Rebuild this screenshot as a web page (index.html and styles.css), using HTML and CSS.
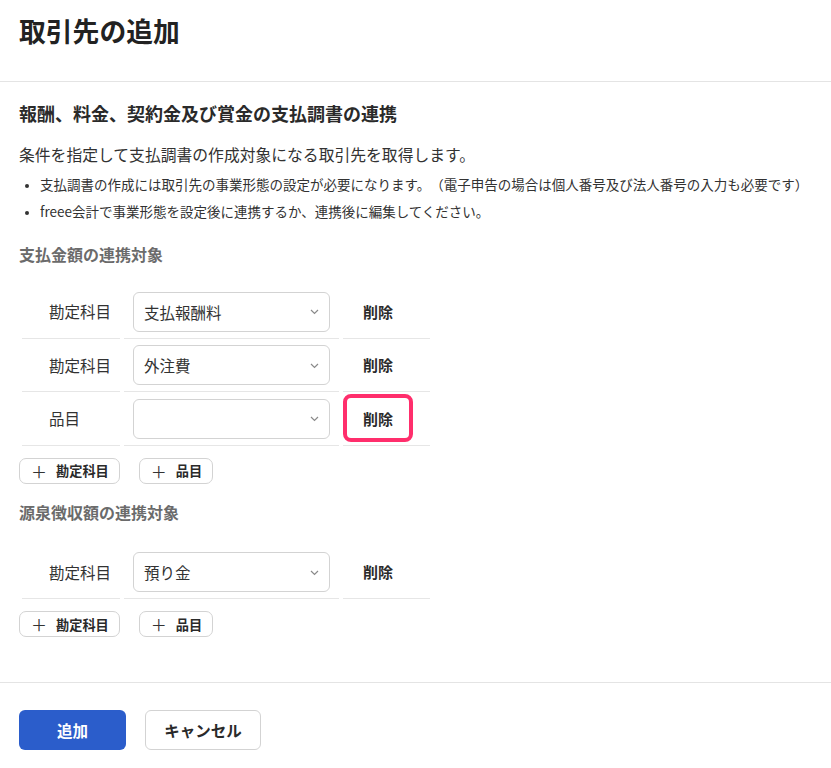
FILE: index.html
```html
<!DOCTYPE html>
<html lang="ja">
<head>
<meta charset="utf-8">
<title>取引先の追加</title>
<link rel="stylesheet" href="styles.css">
</head>
<body>
<div class="dialog">
  <header class="dialog-header">
    <h1 class="dialog-title">取引先の追加</h1>
  </header>
  <main class="dialog-body">
    <h2 class="section-title">報酬、料金、契約金及び賞金の支払調書の連携</h2>
    <p class="lead">条件を指定して支払調書の作成対象になる取引先を取得します。</p>
    <ul class="notes">
      <li>支払調書の作成には取引先の事業形態の設定が必要になります。（電子申告の場合は個人番号及び法人番号の入力も必要です）</li>
      <li>freee会計で事業形態を設定後に連携するか、連携後に編集してください。</li>
    </ul>

    <h3 class="group-title">支払金額の連携対象</h3>
    <div class="cond-table">
      <div class="cell cell-label">勘定科目</div>
      <div class="cell cell-select">
        <div class="select"><span class="select-value">支払報酬料</span><svg class="chev" width="9" height="6" viewBox="0 0 9 6"><path d="M1 1l3.5 3.5L8 1" fill="none" stroke="#8a8a8a" stroke-width="1.2"/></svg></div>
      </div>
      <div class="cell cell-action"><button class="del-btn">削除</button></div>

      <div class="cell cell-label">勘定科目</div>
      <div class="cell cell-select">
        <div class="select"><span class="select-value">外注費</span><svg class="chev" width="9" height="6" viewBox="0 0 9 6"><path d="M1 1l3.5 3.5L8 1" fill="none" stroke="#8a8a8a" stroke-width="1.2"/></svg></div>
      </div>
      <div class="cell cell-action"><button class="del-btn">削除</button></div>

      <div class="cell cell-label">品目</div>
      <div class="cell cell-select">
        <div class="select"><span class="select-value"></span><svg class="chev" width="9" height="6" viewBox="0 0 9 6"><path d="M1 1l3.5 3.5L8 1" fill="none" stroke="#8a8a8a" stroke-width="1.2"/></svg></div>
      </div>
      <div class="cell cell-action"><button class="del-btn del-btn-highlight">削除</button></div>
    </div>
    <div class="add-row">
      <button class="add-btn"><span class="plus">＋</span>勘定科目</button>
      <button class="add-btn"><span class="plus">＋</span>品目</button>
    </div>

    <h3 class="group-title group-title-2">源泉徴収額の連携対象</h3>
    <div class="cond-table cond-table-2">
      <div class="cell cell-label">勘定科目</div>
      <div class="cell cell-select">
        <div class="select"><span class="select-value">預り金</span><svg class="chev" width="9" height="6" viewBox="0 0 9 6"><path d="M1 1l3.5 3.5L8 1" fill="none" stroke="#8a8a8a" stroke-width="1.2"/></svg></div>
      </div>
      <div class="cell cell-action"><button class="del-btn">削除</button></div>
    </div>
    <div class="add-row">
      <button class="add-btn"><span class="plus">＋</span>勘定科目</button>
      <button class="add-btn"><span class="plus">＋</span>品目</button>
    </div>
  </main>
  <footer class="dialog-footer">
    <button class="btn btn-primary">追加</button>
    <button class="btn btn-secondary">キャンセル</button>
  </footer>
</div>
</body>
</html>
```

FILE: styles.css
```css
* { box-sizing: border-box; }
html, body { margin: 0; padding: 0; background: #fff; }
body {
  font-family: "Noto Sans CJK JP", "Noto Sans", sans-serif;
  color: #323232;
  width: 831px;
  text-spacing-trim: space-all;
}
button { font-family: inherit; cursor: pointer; }

.dialog-header {
  height: 82px;
  border-bottom: 1px solid #e4e4e4;
  padding: 12px 19px 0;
}
.dialog-title {
  margin: 0;
  font-size: 26.8px;
  line-height: 38px;
  font-weight: 700;
  color: #222;
}

.dialog-body {
  padding: 17px 19px 45px;
}
.section-title {
  margin: 0;
  font-size: 18px;
  line-height: 28px;
  font-weight: 700;
  color: #2a2a2a;
}
.lead {
  margin: 16px 0 0;
  font-size: 15.8px;
  line-height: 24px;
}
.notes {
  margin: 4px 0 0;
  padding: 0 0 0 21px;
  font-size: 13.5px;
  line-height: 27px;
}
.notes li::marker { font-size: 10px; }

.group-title {
  margin: 17px 0 0;
  font-size: 16px;
  line-height: 24px;
  font-weight: 700;
  color: #6b6b6b;
}
.group-title-2 { margin-top: 16px; }

.cond-table {
  display: grid;
  grid-template-columns: 98px 215px 87px;
  column-gap: 4px;
  padding-left: 3px;
  margin-top: 19px;
}
.cond-table-2 { margin-top: 22px; }
.cell {
  border-bottom: 1px solid #e6e6e6;
  height: 53.5px;
  display: flex;
  align-items: center;
}
.cell-label {
  padding-left: 27px;
  font-size: 15.5px;
}
.cell-select { padding: 7px 9px 6px; }
.select {
  width: 100%;
  height: 40px;
  border: 1px solid #d3d3d3;
  border-radius: 6px;
  display: flex;
  align-items: center;
  justify-content: space-between;
  padding: 0 10px;
  font-size: 15.5px;
  background: #fff;
}
.chev { margin-top: 1px; }
.cell-action { padding: 0 0 0 4px; }
.del-btn {
  width: 62px;
  height: 40px;
  border: none;
  background: #fff;
  font-size: 15px;
  font-weight: 700;
  color: #2a2a2a;
  padding: 0;
  border-radius: 3px;
}
.del-btn-highlight {
  outline: 4px solid #ff2e6c;
  border-radius: 4px;
}

.add-row {
  display: flex;
  gap: 19px;
  margin-top: 12px;
}
.add-btn {
  height: 26px;
  border: 1px solid #d3d3d3;
  border-radius: 7px;
  background: #fff;
  padding: 0 10px 0 11px;
  font-size: 13.2px;
  font-weight: 700;
  color: #2a2a2a;
  display: flex;
  align-items: center;
}
.plus {
  font-weight: 400;
  font-size: 16px;
  margin-right: 9px;
  color: #333;
}

.dialog-footer {
  border-top: 1px solid #e4e4e4;
  padding: 27px 19px 0;
  display: flex;
  gap: 19px;
}
.btn {
  height: 40px;
  border-radius: 6px;
  font-size: 15.5px;
  font-weight: 700;
}
.btn-primary {
  width: 107px;
  background: #2b5dcb;
  color: #fff;
  border: none;
}
.btn-secondary {
  width: 116px;
  background: #fff;
  color: #2a2a2a;
  border: 1px solid #d3d3d3;
}
```
